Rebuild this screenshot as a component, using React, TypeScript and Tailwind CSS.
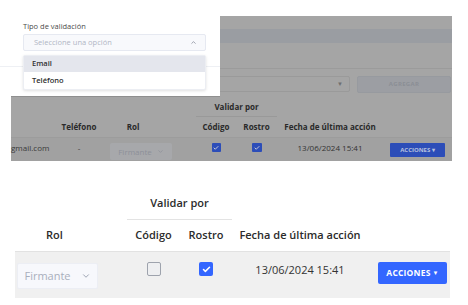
import { ChevronDown, ChevronUp, Check } from 'lucide-react'

function TopTable() {
    return (
        <div className="relative h-[161px]">
            {/* dimmed page behind the popup */}
            <div className="absolute left-[11px] top-[16px] w-[441px] h-[145px] bg-[#a5a5a5] flex flex-col">
                <div className="h-[13px]" />
                <div className="h-[14px] bg-[#9a9da2]" />
                <div className="h-[26px] border-b border-[#9b9b9b]" />
                <div className="flex items-start pt-[7px] h-[28px]">
                    <div className="ml-[150px] w-[189px] h-[16px] border border-[#9a9a9a] rounded-[2px] flex items-center justify-end pr-[6px]">
                        <span className="text-[#6f6f6f] text-[6px]">▼</span>
                    </div>
                    <div className="ml-[7px] w-[94px] h-[17px] bg-[#9c9ea3] border border-[#979a9f] rounded-[2px] flex items-center justify-center text-[6px] font-bold tracking-wider text-[#8b8e95]">
                        AGREGAR
                    </div>
                </div>
                {/* header rows */}
                <div className="flex h-[20px] items-end">
                    <div className="ml-[185px] w-[81px] h-full border-b border-[#999999] flex items-center justify-center text-[8px] font-bold text-[#2a2a2a]">
                        Validar por
                    </div>
                </div>
                <div className="flex h-[21px] items-center border-b border-[#9c9c9c] text-[8px] font-bold text-[#2a2a2a]">
                    <div className="w-[49px]" />
                    <div className="w-[38px] text-center">Teléfono</div>
                    <div className="w-[84px] text-center pr-[14px]">Rol</div>
                    <div className="w-[14px]" />
                    <div className="w-[40px] text-center">Código</div>
                    <div className="w-[41px] text-center">Rostro</div>
                    <div className="w-[106px] text-center">Fecha de última acción</div>
                </div>
                <div className="flex flex-1 bg-[#a1a1a1] text-[8px] text-[#3a3a3a] pt-[5px]">
                    <div className="w-[49px] leading-[10px]">gmail.com</div>
                    <div className="w-[38px] text-center leading-[10px]">-</div>
                    <div className="w-[84px] pl-[12px]">
                        <div className="w-[62px] h-[17px] bg-[#a7a8ab] rounded-[2px] flex items-center justify-center gap-[5px] text-[#8d9099]">
                            Firmante <ChevronDown size={7} strokeWidth={2.5} />
                        </div>
                    </div>
                    <div className="w-[14px]" />
                    <div className="w-[40px] flex justify-center">
                        <div className="w-[9px] h-[9px] bg-[#2c4db8] rounded-[1px] flex items-center justify-center">
                            <Check size={6} strokeWidth={4} className="text-[#c4c8d6]" />
                        </div>
                    </div>
                    <div className="w-[41px] flex justify-center">
                        <div className="w-[10px] h-[9px] bg-[#2c4db8] rounded-[1px] flex items-center justify-center">
                            <Check size={6} strokeWidth={4} className="text-[#c4c8d6]" />
                        </div>
                    </div>
                    <div className="w-[106px] text-center leading-[10px] text-[#333]">13/06/2024 15:41</div>
                    <div className="pl-[7px]">
                        <div className="w-[55px] h-[14px] bg-[#2c4db8] rounded-[1px] flex items-center justify-center text-[6px] font-bold text-[#b7c0de]">
                            ACCIONES ▾
                        </div>
                    </div>
                </div>
            </div>

            {/* popup with the select open */}
            <div className="absolute left-0 top-0 w-[220px] h-[97px] bg-white">
                <div className="absolute left-0 top-[66px] w-full h-px bg-[#eef0f4]" />
                <div className="absolute left-[11px] bottom-0 right-0 h-px bg-[#8f8f8f]" />
                <div className="absolute left-[23px] top-[20px] w-[183px]">
                    <div className="text-[7.5px] text-[#4b4b4b] leading-[12px]">Tipo de validación</div>
                    <div className="mt-[2px] h-[17px] bg-[#f8f9fc] border border-[#e6e9f1] rounded-[2px] flex items-center justify-between pl-[10px] pr-[8px]">
                        <span className="text-[7.5px] text-[#b1b6c4]">Seleccione una opción</span>
                        <ChevronUp size={7} strokeWidth={2.5} className="text-[#7f8594]" />
                    </div>
                    <div className="mt-[4px] bg-white border border-[#eceef3] rounded-[2px] shadow-[0_1px_3px_rgba(0,0,0,0.12)] text-[7.5px] font-semibold text-[#2f2f2f]">
                        <div className="h-[16px] bg-[#e4e6ed] flex items-center pl-[8px]">Email</div>
                        <div className="h-[17px] flex items-center pl-[8px]">Teléfono</div>
                    </div>
                </div>
            </div>
        </div>
    )
}

function BottomTable() {
    return (
        <div className="pl-[15px] w-[450px] pt-[27px]">
            <div className="flex">
                <div className="ml-[112px] w-[105px] h-[32px] border-b border-[#e3e3e3] flex items-center justify-center text-[11px] font-semibold text-[#2b2b2b] pb-[1px]">
                    Validar por
                </div>
            </div>
            <div className="flex h-[32px] items-center border-b border-[#e2e2e2] text-[11px] font-semibold text-[#2b2b2b]">
                <div className="w-[112px] pl-[31px]">Rol</div>
                <div className="w-[53px] text-center">Código</div>
                <div className="w-[52px] text-center">Rostro</div>
                <div className="w-[136px] text-center">Fecha de última acción</div>
            </div>
            <div className="flex h-[46px] bg-[#f0f0f0] pt-[10px]">
                <div className="w-[112px] pl-[2px]">
                    <div className="w-[81px] h-[26px] mt-[1px] bg-[#f7f8fc] border border-[#eceef4] rounded-[2px] flex items-center justify-center gap-[10px] text-[11px] text-[#a9afbd]">
                        Firmante <ChevronDown size={10} strokeWidth={2} className="text-[#8e95a6]" />
                    </div>
                </div>
                <div className="w-[53px] flex justify-center">
                    <div className="w-[14px] h-[14px] bg-[#eeeff1] border border-[#9ea3ad] rounded-[2px]" />
                </div>
                <div className="w-[52px] flex justify-center">
                    <div className="w-[14px] h-[14px] bg-[#3366ff] rounded-[2px] flex items-center justify-center">
                        <Check size={9} strokeWidth={4} className="text-white" />
                    </div>
                </div>
                <div className="w-[136px] text-center text-[11px] text-[#333] leading-[16px]">13/06/2024 15:41</div>
                <div className="pl-[10px]">
                    <div className="w-[69px] h-[22px] bg-[#3366ff] rounded-[2px] flex items-center justify-center text-[8.5px] font-bold text-white tracking-[0.2px]">
                        ACCIONES <span className="ml-[2px] text-[6px]">▼</span>
                    </div>
                </div>
            </div>
        </div>
    )
}

export default function App() {
    return (
        <div className="w-[468px] h-[305px] bg-white overflow-hidden font-['Open_Sans',sans-serif]">
            <TopTable />
            <BottomTable />
        </div>
    )
}
